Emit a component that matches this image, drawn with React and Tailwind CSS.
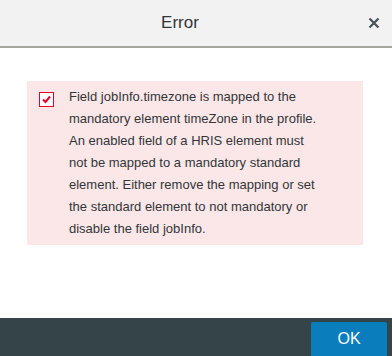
export default function App() {
  return (
    <div className="w-[392px] h-[356px] bg-white flex flex-col" style={{ fontFamily: '"Liberation Sans", Arial, sans-serif' }}>
      <div className="h-[48px] bg-[#f2f2f2] border-b-2 border-[#a5a5a0] flex items-center shrink-0">
        <div className="flex-1 text-center text-[17px] text-[#32363a]">Error</div>
        <div className="w-[32px] flex items-center justify-center pr-[4px]">
          <svg width="12" height="12" viewBox="0 0 12 12">
            <path d="M1.5 1.5 L10.5 10.5 M10.5 1.5 L1.5 10.5" stroke="#4a5358" strokeWidth="2.2" strokeLinecap="butt" />
          </svg>
        </div>
      </div>
      <div className="flex-1 pt-[33px] px-[27px]">
        <div className="w-[336px] bg-[#fbe7e7] flex pt-[5px] pb-[5px] pl-[12px]">
          <div className="pt-[6px]">
            <div className="w-[15px] h-[15px] border border-[#e8002b] bg-white flex items-center justify-center">
              <svg width="11" height="11" viewBox="0 0 11 11">
                <path d="M2 5.5 L4.5 8 L9 2.5" stroke="#e8002b" strokeWidth="2" fill="none" />
              </svg>
            </div>
          </div>
          <div className="ml-[15px] w-[252px] text-[13px] leading-[22px] text-[#32363a]">
            Field jobInfo.timezone is mapped to the mandatory element timeZone in the profile. An enabled field of a HRIS element must not be mapped to a mandatory standard element. Either remove the mapping or set the standard element to not mandatory or disable the field jobInfo.
          </div>
        </div>
      </div>
      <div className="h-[38px] bg-[#354448] flex justify-end items-end shrink-0">
        <div className="w-[76px] h-[34px] mr-[5px] bg-[#0a7ebd] rounded-t-[2px] flex items-center justify-center text-white text-[16px]">OK</div>
      </div>
    </div>
  );
}
